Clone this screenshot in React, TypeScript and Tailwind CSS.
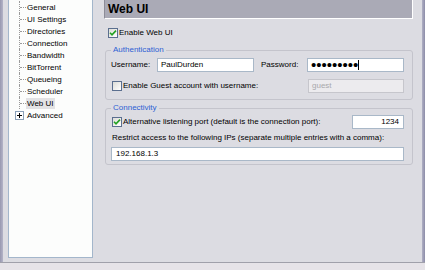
import React from "react";

function Check({ checked }: { checked?: boolean }) {
  return (
    <span className="relative flex h-[10px] w-[10px] shrink-0 items-center justify-center border border-[#5b6f8f] bg-gradient-to-br from-[#dcdcd7] to-white">
      {checked && (
        <svg width="8" height="8" viewBox="0 0 8 8" className="block">
          <path d="M1 3.8 L3 5.8 L7 1.6" stroke="#21a121" strokeWidth="1.6" fill="none" />
        </svg>
      )}
    </span>
  );
}

const items = ["General", "UI Settings", "Directories", "Connection", "Bandwidth", "BitTorrent", "Queueing", "Scheduler", "Web UI"];

export default function App() {
  return (
    <div className="flex h-[270px] w-[425px] flex-col overflow-hidden bg-[#dcdce2] font-['Liberation_Sans',Arial,sans-serif] text-[8px] leading-[10px] text-black">
      <div className="flex h-[262px]">
        <div className="w-[3px] bg-gradient-to-r from-[#9898b0] to-[#b4b4c8]" />
        <div className="w-[90px] pb-[4px] pl-[5px]">
          <div className="h-full border-x border-b border-[#a3b6cb] bg-[#fcfdfc] pt-[1px]">
            {items.map((t) => (
              <div key={t} className="flex h-[12px] items-center">
                <div className="ml-[10px] flex h-full w-[7px] items-center border-l border-dotted border-[#9a9a9a]">
                  <div className="w-full border-t border-dotted border-[#9a9a9a]" />
                </div>
                <span className={"px-[1px] leading-[11px] " + (t === "Web UI" ? "bg-[#e2e2e4]" : "")}>{t}</span>
              </div>
            ))}
            <div className="flex h-[12px] items-center">
              <svg width="9" height="9" viewBox="0 0 9 9" className="ml-[6px] block">
                <rect x="0.5" y="0.5" width="8" height="8" fill="white" stroke="#8aa0b8" />
                <path d="M2 4.5 H7 M4.5 2 V7" stroke="black" strokeWidth="1" />
              </svg>
              <span className="ml-[2px] px-[1px] leading-[11px]">Advanced</span>
            </div>
          </div>
        </div>
        <div className="ml-[11px] flex w-[309px] flex-col">
          <div className="flex h-[19px] items-center border-b border-l border-r border-b-white border-l-[#8c8c98] border-r-white bg-[#aaaab6] pl-[3px] text-[12px] font-bold leading-[14px]">
            Web UI
          </div>
          <div className="mt-[8px] flex h-[12px] items-center pl-[4px]">
            <Check checked />
            <span className="ml-[1px]">Enable Web UI</span>
          </div>
          <fieldset className="mt-[5px] ml-[1px] w-[308px] rounded-[3px] border border-[#c4c4cc] pb-[6px] pl-[5px] pr-[8px]">
            <legend className="px-[2px] leading-[12px] text-[#2e5fd4]">Authentication</legend>
            <div className="mt-[2px] flex h-[14px] items-center">
              <span className="w-[46px]">Username:</span>
              <div className="flex h-[14px] w-[97px] items-center border border-[#a9b8c8] bg-white pl-[3px]">PaulDurden</div>
              <span className="ml-[7px] w-[46px]">Password:</span>
              <div className="flex h-[14px] w-[97px] items-center border border-[#a9b8c8] bg-white pl-[3px]">
                <span className="text-[15px] leading-[10px]">•••••••••</span>
                <span className="ml-[0px] h-[10px] w-[1px] bg-black" />
              </div>
            </div>
            <div className="mt-[7px] flex h-[14px] items-center">
              <span className="ml-[1px]"><Check /></span>
              <span className="ml-[1px]">Enable Guest account with username:</span>
              <div className="flex-1" />
              <div className="flex h-[14px] w-[96px] items-center border border-[#c6c6cc] bg-[#ecebee] pl-[3px] text-[#a8a8ac]">guest</div>
            </div>
          </fieldset>
          <fieldset className="mt-[2px] ml-[1px] w-[308px] rounded-[3px] border border-[#c4c4cc] pb-[3px] pl-[5px] pr-[8px]">
            <legend className="px-[2px] leading-[12px] text-[#2e5fd4]">Connectivity</legend>
            <div className="mt-[1px] flex h-[14px] items-center">
              <span className="ml-[1px]"><Check checked /></span>
              <span className="ml-[1px]">Alternative listening port (default is the connection port):</span>
              <div className="flex-1" />
              <div className="flex h-[14px] w-[52px] items-center justify-end border border-[#a9b8c8] bg-white pr-[4px]">1234</div>
            </div>
            <div className="ml-[1px] mt-[4px] leading-[10px]">Restrict access to the following IPs (separate multiple entries with a comma):</div>
            <div className="mt-[4px] flex h-[14px] w-full items-center border border-[#a9b8c8] bg-white pl-[4px]">192.168.1.3</div>
          </fieldset>
        </div>
        <div className="flex-1" />
        <div className="w-[3px] bg-gradient-to-r from-[#b0b0c4] to-[#8c8ca8]" />
      </div>
      <div className="h-[8px] border-t border-[#a0a0aa] bg-[#e6e3e8]" />
    </div>
  );
}
